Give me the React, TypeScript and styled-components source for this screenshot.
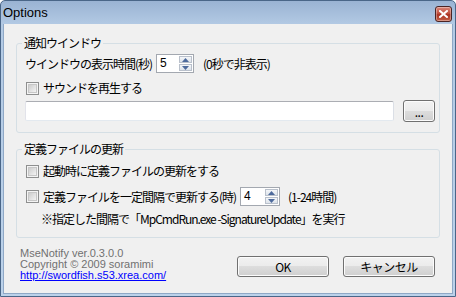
import React from "react";
import styled, { createGlobalStyle } from "styled-components";

const Global = createGlobalStyle`
  html, body { margin: 0; padding: 0; background: #ffffff; }
  body { font-family: "Noto Sans CJK JP", "Liberation Sans", sans-serif; }
  * { box-sizing: border-box; }
`;

const Window = styled.div`
  width: 456px;
  height: 297px;
  display: flex;
  flex-direction: column;
  border: 1px solid #4a6688;
  border-radius: 5px 5px 0 0;
  background: linear-gradient(#9ab3d3, #b3cae4 24px, #bcd2ea);
`;

const TitleBar = styled.div`
  height: 23px;
  display: flex;
  align-items: center;
  justify-content: space-between;
  padding: 0 3px 0 2px;
`;

const Title = styled.span`
  font-family: "Liberation Sans", Arial, sans-serif;
  font-size: 13px;
  color: #000;
`;

const CloseBtn = styled.div`
  width: 17px;
  height: 16px;
  margin-top: 2px;
  border: 1px solid #4b2424;
  border-radius: 3px;
  background: linear-gradient(#d9877a, #c2503f 45%, #a83223 55%, #c45f46);
  box-shadow: inset 0 0 0 1px rgba(255, 255, 255, 0.35);
  display: flex;
  align-items: center;
  justify-content: center;
`;

const Client = styled.div`
  flex: 1;
  margin: 0 2px 2px 2px;
  background: #f0f0f0;
  border: 1px solid #8fa8c6;
  border-top: none;
  padding: 19px 12px 0 12px;
  display: flex;
  flex-direction: column;
`;

const Group = styled.div<{ $pt: number; $pb: number; $mt?: number }>`
  position: relative;
  border: 1px solid #d5dfe5;
  border-radius: 3px;
  padding: ${(p) => p.$pt}px 4px ${(p) => p.$pb}px 8px;
  margin-top: ${(p) => p.$mt ?? 0}px;
  display: flex;
  flex-direction: column;
`;

const Legend = styled.span`
  position: absolute;
  top: -9px;
  left: 5px;
  padding: 0 2px;
  background: #f0f0f0;
  font-size: 12px;
  line-height: 16px;
  letter-spacing: -1px;
  color: #000;
`;

const Row = styled.div<{ $h: number; $mt?: number; $indent?: number }>`
  display: flex;
  align-items: center;
  height: ${(p) => p.$h}px;
  margin-top: ${(p) => p.$mt ?? 0}px;
  padding-left: ${(p) => p.$indent ?? 0}px;
`;

const Text = styled.span<{ $w?: number; $ml?: number }>`
  font-size: 12px;
  line-height: 16px;
  letter-spacing: -1px;
  color: #000;
  white-space: nowrap;
  ${(p) => (p.$w ? `width: ${p.$w}px; flex: none;` : "")}
  margin-left: ${(p) => p.$ml ?? 0}px;
`;

const Check = styled.span`
  width: 13px;
  height: 13px;
  flex: none;
  margin-left: 1px;
  margin-right: 4px;
  border: 1px solid #8e8f8f;
  background: #f4f4f4;
  position: relative;
  &::after {
    content: "";
    position: absolute;
    inset: 1px;
    border: 1px solid #c7c7c7;
    background: linear-gradient(135deg, #cdcdcd, #f3f3f3);
  }
`;

const SpinBox = styled.div<{ $w: number; $ml: number }>`
  width: ${(p) => p.$w}px;
  height: 19px;
  margin-left: ${(p) => p.$ml}px;
  flex: none;
  display: flex;
  border: 1px solid #a3a8b0;
  background: #fff;
  padding: 1px;
`;

const SpinValue = styled.span`
  flex: 1;
  font-family: "Liberation Sans", Arial, sans-serif;
  font-size: 12px;
  line-height: 15px;
  padding-left: 2px;
  color: #000;
`;

const SpinButtons = styled.div`
  width: 13px;
  display: flex;
  flex-direction: column;
  gap: 1px;
`;

const SpinHalf = styled.div`
  flex: 1;
  border: 1px solid #b9c0cb;
  background: linear-gradient(#f4f6f9, #dde3ea);
  display: flex;
  align-items: center;
  justify-content: center;
`;

const TextBox = styled.div`
  flex: 1;
  height: 20px;
  border: 1px solid #abadb3;
  border-color: #abadb3 #dbdfe6 #e3e9ef #e2e3ea;
  border-radius: 2px;
  background: #fff;
`;

const Button = styled.div<{ $w: number; $h: number; $ml?: number }>`
  width: ${(p) => p.$w}px;
  height: ${(p) => p.$h}px;
  margin-left: ${(p) => p.$ml ?? 0}px;
  flex: none;
  border: 1px solid #707070;
  border-radius: 3px;
  background: linear-gradient(#f2f2f2, #ebebeb 50%, #dddddd 50%, #cfcfcf);
  box-shadow: inset 0 0 0 1px #fcfcfc;
  display: flex;
  align-items: center;
  justify-content: center;
  font-size: 12px;
  letter-spacing: -0.5px;
  color: #000;
`;

const Footer = styled.div`
  display: flex;
  justify-content: space-between;
  align-items: flex-start;
  padding: 0 5px 0 4px;
`;

const Info = styled.div`
  margin-top: 10px;
  display: flex;
  flex-direction: column;
  font-family: "Liberation Sans", Arial, sans-serif;
  font-size: 11px;
  line-height: 11px;
  color: #707070;
`;

const Link = styled.a`
  color: #0000ff;
  text-decoration: underline;
`;

const Buttons = styled.div`
  display: flex;
  margin-top: 18px;
`;

const Arrow = ({ up }: { up?: boolean }) => (
  <svg width="7" height="4" viewBox="0 0 7 4">
    <path d={up ? "M0 4 L3.5 0 L7 4 Z" : "M0 0 L3.5 4 L7 0 Z"} fill="#4d6a9c" />
  </svg>
);

const Spinner = ({ value, w, ml }: { value: string; w: number; ml: number }) => (
  <SpinBox $w={w} $ml={ml}>
    <SpinValue>{value}</SpinValue>
    <SpinButtons>
      <SpinHalf>
        <Arrow up />
      </SpinHalf>
      <SpinHalf>
        <Arrow />
      </SpinHalf>
    </SpinButtons>
  </SpinBox>
);

export default function App() {
  return (
    <>
      <Global />
      <Window>
        <TitleBar>
          <Title>Options</Title>
          <CloseBtn>
            <svg width="9" height="8" viewBox="0 0 9 8">
              <path d="M1 1 L8 7 M8 1 L1 7" stroke="#fff" strokeWidth="2" strokeLinecap="square" />
            </svg>
          </CloseBtn>
        </TitleBar>
        <Client>
          <Group $pt={10} $pb={10}>
            <Legend>通知ウインドウ</Legend>
            <Row $h={19}>
              <Text $w={131}>ウインドウの表示時間(秒)</Text>
              <Spinner value="5" w={38} ml={0} />
              <Text $ml={9}>(0秒で非表示)</Text>
            </Row>
            <Row $h={16} $mt={7}>
              <Check />
              <Text>サウンドを再生する</Text>
            </Row>
            <Row $h={22} $mt={4}>
              <TextBox />
              <Button $w={32} $h={22} $ml={9}>
                ...
              </Button>
            </Row>
          </Group>
          <Group $pt={13} $pb={10} $mt={16}>
            <Legend>定義ファイルの更新</Legend>
            <Row $h={16}>
              <Check />
              <Text>起動時に定義ファイルの更新をする</Text>
            </Row>
            <Row $h={19} $mt={8}>
              <Check />
              <Text $w={197}>定義ファイルを一定間隔で更新する(時)</Text>
              <Spinner value="4" w={40} ml={0} />
              <Text $ml={8}>(1-24時間)</Text>
            </Row>
            <Row $h={16} $mt={5} $indent={16}>
              <Text>※指定した間隔で「MpCmdRun.exe -SignatureUpdate」を実行</Text>
            </Row>
          </Group>
          <Footer>
            <Info>
              <span>MseNotify ver.0.3.0.0</span>
              <span>Copyright © 2009 soramimi</span>
              <Link href="#">http://swordfish.s53.xrea.com/</Link>
            </Info>
            <Buttons>
              <Button $w={92} $h={21}>OK</Button>
              <Button $w={92} $h={21} $ml={14}>キャンセル</Button>
            </Buttons>
          </Footer>
        </Client>
      </Window>
    </>
  );
}
